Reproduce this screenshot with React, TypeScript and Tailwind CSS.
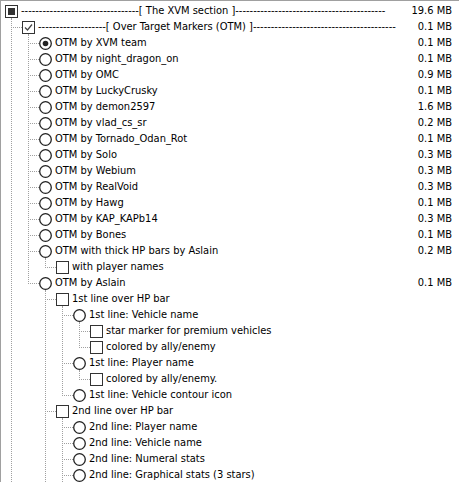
import React from 'react';

type Kind = 'check' | 'radio';
type Mark = 'on' | 'off' | 'partial';

interface Item {
  label: string;
  kind: Kind;
  mark?: Mark;
  size?: string;
  // list goes on below the visible part, so the branch line keeps running
  more?: boolean;
  children?: Item[];
}

interface Row {
  item: Item;
  guides: boolean[];
}

const radio = (label: string, size?: string, children?: Item[]): Item => ({ label, kind: 'radio', size, children });
const check = (label: string, children?: Item[]): Item => ({ label, kind: 'check', children });

const components: Item = {
  label: '-'.repeat(33) + '[ The XVM section ]' + '-'.repeat(42),
  kind: 'check',
  mark: 'partial',
  size: '19.6 MB',
  children: [
    {
      label: '-'.repeat(19) + '[ Over Target Markers (OTM) ]' + '-'.repeat(40),
      kind: 'check',
      mark: 'on',
      size: '0.1 MB',
      more: true,
      children: [
        { ...radio('OTM by XVM team', '0.1 MB'), mark: 'on' },
        radio('OTM by night_dragon_on', '0.1 MB'),
        radio('OTM by OMC', '0.9 MB'),
        radio('OTM by LuckyCrusky', '0.1 MB'),
        radio('OTM by demon2597', '1.6 MB'),
        radio('OTM by vlad_cs_sr', '0.2 MB'),
        radio('OTM by Tornado_Odan_Rot', '0.1 MB'),
        radio('OTM by Solo', '0.3 MB'),
        radio('OTM by Webium', '0.3 MB'),
        radio('OTM by RealVoid', '0.3 MB'),
        radio('OTM by Hawg', '0.1 MB'),
        radio('OTM by KAP_KAPb14', '0.3 MB'),
        radio('OTM by Bones', '0.1 MB'),
        radio('OTM with thick HP bars by Aslain', '0.2 MB', [check('with player names')]),
        radio('OTM by Aslain', '0.1 MB', [
          check('1st line over HP bar', [
            radio('1st line: Vehicle name', undefined, [
              check('star marker for premium vehicles'),
              check('colored by ally/enemy'),
            ]),
            radio('1st line: Player name', undefined, [check('colored by ally/enemy.')]),
            radio('1st line: Vehicle contour icon'),
          ]),
          {
            ...check('2nd line over HP bar', [
              radio('2nd line: Player name'),
              radio('2nd line: Vehicle name'),
              radio('2nd line: Numeral stats'),
              { ...radio('2nd line: Graphical stats (3 stars)'), more: true },
            ]),
            more: true,
          },
        ]),
      ],
    },
  ],
};

function flatten(item: Item, guides: boolean[], out: Row[]) {
  out.push({ item, guides });
  const kids = item.children ?? [];
  kids.forEach((child, i) => {
    const next = i < kids.length - 1 || !!child.more;
    flatten(child, [...guides, next], out);
  });
  return out;
}

const LINE = '#a0a0a0';

function Guide({ line }: { line: boolean }) {
  return (
    <svg width="17" height="16" className="shrink-0" shapeRendering="crispEdges">
      {line && <line x1="6.5" y1="0" x2="6.5" y2="16" stroke={LINE} strokeDasharray="1 1" />}
    </svg>
  );
}

function Elbow({ more }: { more: boolean }) {
  return (
    <svg width="17" height="16" className="shrink-0" shapeRendering="crispEdges">
      <line x1="6.5" y1="0" x2="6.5" y2={more ? 16 : 9} stroke={LINE} strokeDasharray="1 1" />
      <line x1="8" y1="8.5" x2="17" y2="8.5" stroke={LINE} strokeDasharray="1 1" />
    </svg>
  );
}

function Box({ kind, mark = 'off' }: { kind: Kind; mark?: Mark }) {
  if (kind === 'radio') {
    return (
      <svg width="13" height="13" viewBox="0 0 13 13">
        <circle cx="6.5" cy="6.5" r="5.8" fill="#fff" stroke="#222" strokeWidth="1.3" />
        {mark === 'on' && <circle cx="6.5" cy="6.5" r="2.8" fill="#222" />}
      </svg>
    );
  }
  return (
    <svg width="13" height="13" viewBox="0 0 13 13" shapeRendering={mark === 'on' ? undefined : 'crispEdges'}>
      <rect x="0.5" y="0.5" width="12" height="12" fill="#fff" stroke="#333" />
      {mark === 'partial' && <rect x="3" y="3" width="7" height="7" fill="#333" />}
      {mark === 'on' && (
        <polyline points="3,6.5 5.5,9 10,3.5" fill="none" stroke="#444" strokeWidth="1.2" />
      )}
    </svg>
  );
}

export default function App() {
  const rows = flatten(components, [], []);
  return (
    <div className="h-[482px] w-[459px] overflow-hidden border-l border-t border-[#a0a0a0] bg-white pl-1 pr-[7px] pt-[2px] font-['DejaVu_Sans_Condensed','Liberation_Sans',sans-serif] text-[11px] leading-4 text-black">
      {rows.map(({ item, guides }, i) => (
        <div key={i} className="flex h-4">
          {guides.map((g, k) =>
            k < guides.length - 1 ? <Guide key={k} line={g} /> : <Elbow key={k} more={g} />
          )}
          <div className="flex w-[16px] shrink-0 flex-col pt-[2px]">
            <Box kind={item.kind} mark={item.mark} />
            {item.children && <div className="ml-[6px] h-px w-px bg-[#a0a0a0]" />}
          </div>
          <span className="flex-1 overflow-hidden whitespace-nowrap">{item.label}</span>
          <span className="shrink-0 pl-2 text-right">{item.size}</span>
        </div>
      ))}
    </div>
  );
}
